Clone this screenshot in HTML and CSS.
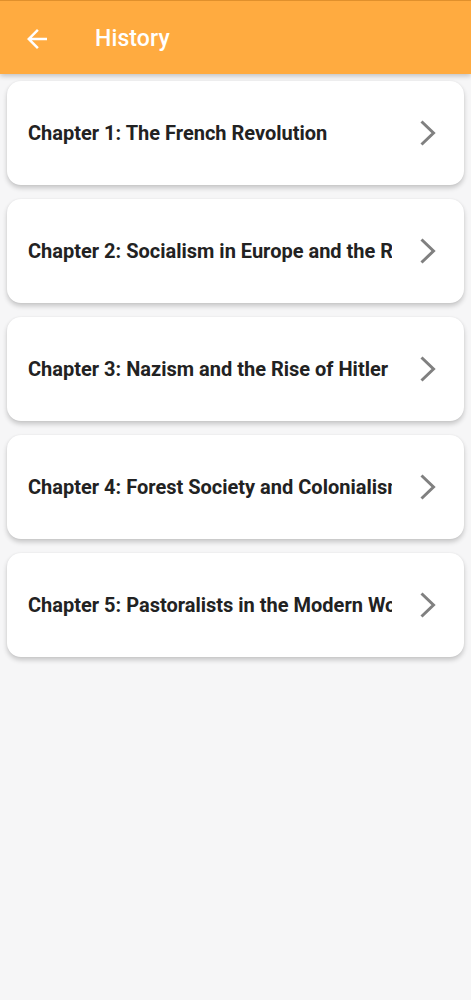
FILE: index.html
```html
<!DOCTYPE html>
<html>
<head>
<meta charset="utf-8">
<link rel="stylesheet" href="styles.css">
</head>
<body>
<header class="appbar">
  <svg class="back" viewBox="0 0 24 24" width="30" height="30"><path d="M20 11H7.83l5.59-5.59L12 4l-8 8 8 8 1.41-1.41L7.83 13H20v-2z" fill="#fff"/></svg>
  <h1 class="title">History</h1>
</header>
<main class="list">
  <div class="card"><span class="label">Chapter 1: The French Revolution</span><svg class="chev" viewBox="0 0 16 26" width="16" height="26"><polyline points="1.5,1.5 13.5,13 1.5,24.5" fill="none" stroke="#808080" stroke-width="3"/></svg></div>
  <div class="card"><span class="label">Chapter 2: Socialism in Europe and the Russian Revolution</span><svg class="chev" viewBox="0 0 16 26" width="16" height="26"><polyline points="1.5,1.5 13.5,13 1.5,24.5" fill="none" stroke="#808080" stroke-width="3"/></svg></div>
  <div class="card"><span class="label">Chapter 3: Nazism and the Rise of Hitler</span><svg class="chev" viewBox="0 0 16 26" width="16" height="26"><polyline points="1.5,1.5 13.5,13 1.5,24.5" fill="none" stroke="#808080" stroke-width="3"/></svg></div>
  <div class="card"><span class="label">Chapter 4: Forest Society and Colonialism</span><svg class="chev" viewBox="0 0 16 26" width="16" height="26"><polyline points="1.5,1.5 13.5,13 1.5,24.5" fill="none" stroke="#808080" stroke-width="3"/></svg></div>
  <div class="card"><span class="label">Chapter 5: Pastoralists in the Modern World</span><svg class="chev" viewBox="0 0 16 26" width="16" height="26"><polyline points="1.5,1.5 13.5,13 1.5,24.5" fill="none" stroke="#808080" stroke-width="3"/></svg></div>
</main>
</body>
</html>
```
FILE: styles.css
```css
* { box-sizing: border-box; }
html, body { margin: 0; padding: 0; }
body {
  background: #f6f6f7;
  font-family: Roboto, "Noto Sans", sans-serif;
  width: 471px;
  height: 1000px;
  overflow: hidden;
}
.appbar {
  height: 74px;
  background: #ffab40;
  border-top: 1px solid #e0902c;
  display: flex;
  align-items: center;
  padding: 2px 0 0 22px;
  box-shadow: 0 2px 5px rgba(0,0,0,0.22);
  position: relative;
  z-index: 1;
}
.back { display: block; flex: none; }
.title {
  margin: 0 0 0 43px;
  color: #fff;
  font-size: 23px;
  font-weight: 500;
  letter-spacing: 0.1px;
}
.list {
  padding: 7px 7px 0 7px;
  display: flex;
  flex-direction: column;
  gap: 14px;
}
.card {
  height: 104px;
  background: #fff;
  border-radius: 14px;
  box-shadow: 0 3px 5px rgba(0,0,0,0.2), 0 0 2px rgba(0,0,0,0.06);
  display: flex;
  align-items: center;
  padding-left: 21px;
}
.label {
  width: 364px;
  flex: none;
  white-space: nowrap;
  overflow: hidden;
  font-size: 20px;
  font-weight: 700;
  color: #222;
}
.chev {
  display: block;
  margin-left: 28px;
  flex: none;
}
```
